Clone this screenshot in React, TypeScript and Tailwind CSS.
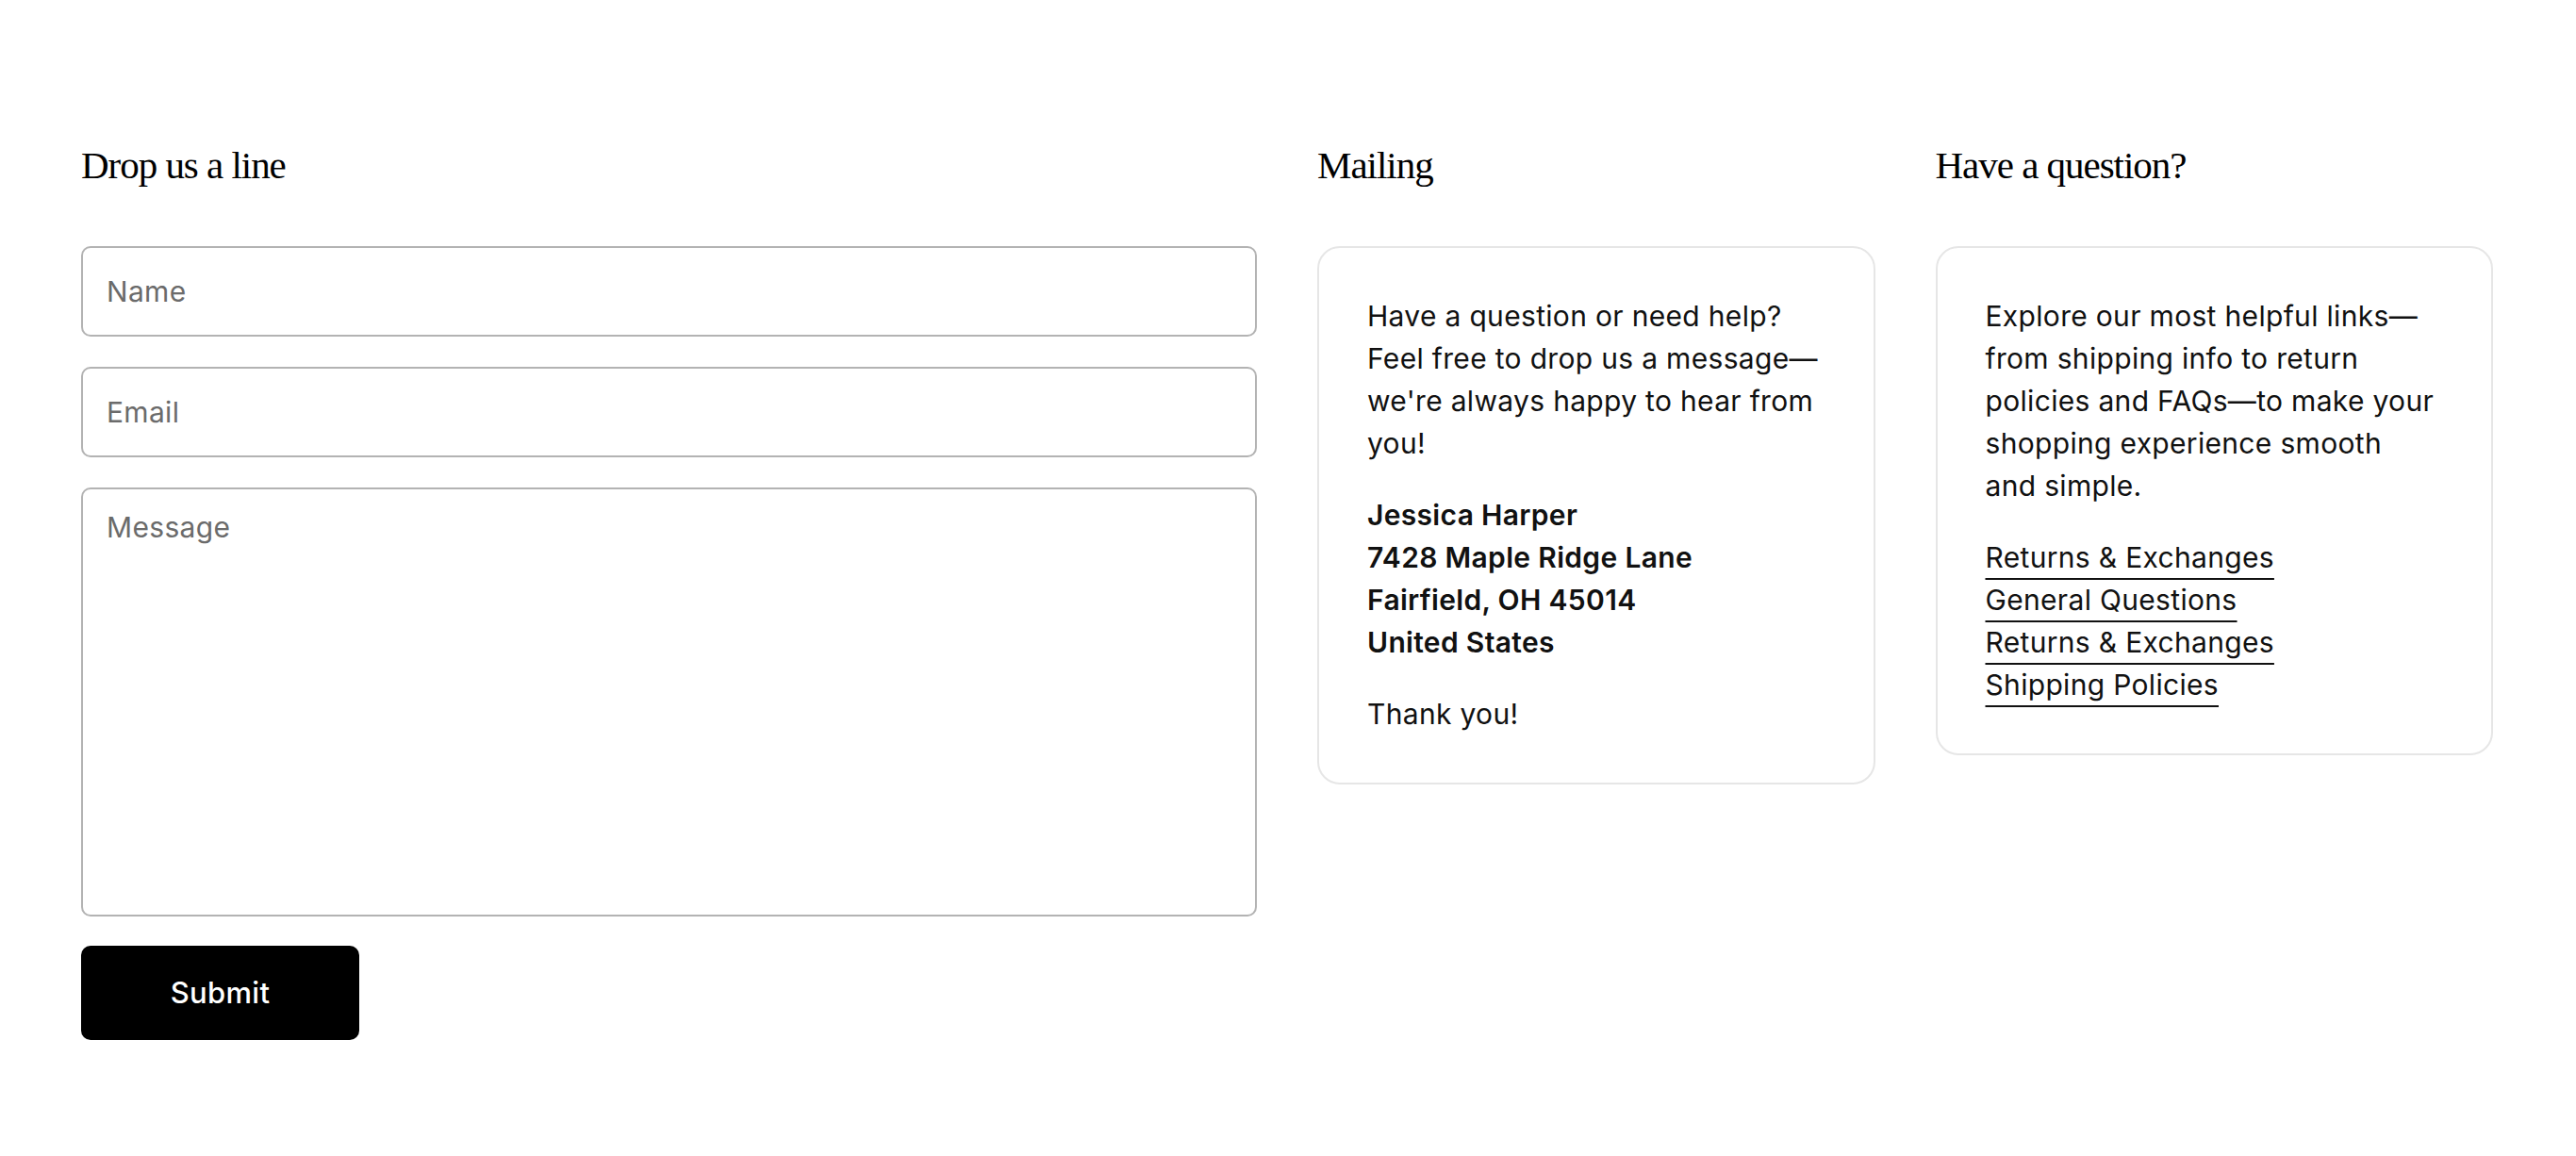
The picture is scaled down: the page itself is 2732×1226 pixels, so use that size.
const links = [
  "Returns & Exchanges",
  "General Questions",
  "Returns & Exchanges",
  "Shipping Policies",
];

function Heading({ children }: { children: React.ReactNode }) {
  return (
    <h2 className="font-['Liberation_Serif',serif] text-[41px] leading-[49px] tracking-[-0.025em] text-black">
      {children}
    </h2>
  );
}

export default function App() {
  const field =
    "w-full rounded-[10px] border-2 border-[#b3b3b3] bg-white px-[25px] text-[30px] text-[#111] outline-none placeholder:text-[#6b6b6b]";

  return (
    <div className="min-h-screen bg-white font-['Inter',sans-serif] tracking-[0.02em] text-[#111]">
      <section className="grid grid-cols-4 gap-x-[64px] pl-[86px] pr-[88px] pt-[151px]">
        {/* form */}
        <div className="col-span-2 flex flex-col gap-[61px]">
          <Heading>Drop us a line</Heading>
          <form className="flex flex-col" onSubmit={(e) => e.preventDefault()}>
            <input type="text" placeholder="Name" className={`${field} h-[96px]`} />
            <input type="email" placeholder="Email" className={`${field} mt-[32px] h-[96px]`} />
            <textarea
              placeholder="Message"
              className={`${field} mt-[32px] h-[455px] resize-none py-[19px] leading-[42px]`}
            />
            <button
              type="submit"
              className="mt-[31px] flex h-[100px] w-[295px] items-center justify-center rounded-[10px] bg-black text-[31px] font-medium text-white"
            >
              Submit
            </button>
          </form>
        </div>

        {/* mailing */}
        <div className="flex flex-col gap-[61px]">
          <Heading>Mailing</Heading>
          <div className="rounded-[24px] border-2 border-[#e6e6e6] px-[51px] py-[50px] text-[30px] leading-[45px]">
            <p>
              Have a question or need help? Feel free to drop us a message—we're always happy to hear
              from you!
            </p>
            <p className="mt-[31px] font-semibold">
              Jessica Harper
              <br />
              7428 Maple Ridge Lane
              <br />
              Fairfield, OH 45014
              <br />
              United States
            </p>
            <p className="mt-[31px]">Thank you!</p>
          </div>
        </div>

        {/* questions */}
        <div className="flex flex-col gap-[61px]">
          <Heading>Have a question?</Heading>
          <div className="rounded-[24px] border-2 border-[#e6e6e6] px-[51px] py-[50px] text-[30px] leading-[45px]">
            <p>
              Explore our most helpful links—from shipping info to return policies and FAQs—to make
              your shopping experience smooth <span className="whitespace-nowrap">and simple.</span>
            </p>
            <ul className="mt-[31px] flex flex-col">
              {links.map((l, i) => (
                <li key={i}>
                  <a
                    href="#"
                    className="text-[#111] underline decoration-[#111] decoration-2 underline-offset-[11px]"
                  >
                    {l}
                  </a>
                </li>
              ))}
            </ul>
          </div>
        </div>
      </section>
    </div>
  );
}
